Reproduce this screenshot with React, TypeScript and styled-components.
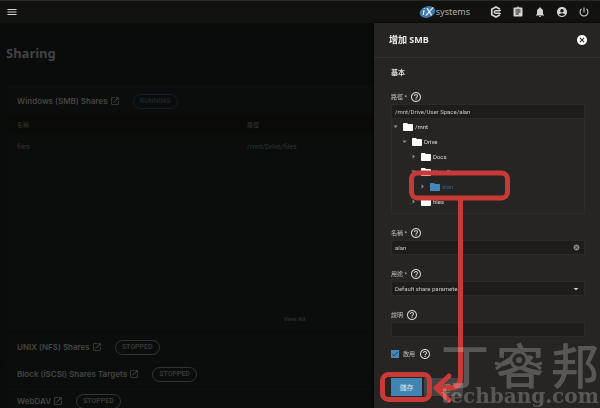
import React from 'react';
import styled, { createGlobalStyle } from 'styled-components';
import {
  MdAccountCircle,
  MdArrowDropDown,
  MdArrowRight,
  MdAssignment,
  MdCancel,
  MdCheck,
  MdFolder,
  MdHelpOutline,
  MdMenu,
  MdNotifications,
  MdOpenInNew,
  MdPowerSettingsNew,
} from 'react-icons/md';

const sans = `Roboto, "Noto Sans CJK TC", sans-serif`;
const heading = `"Noto Sans", "Noto Sans CJK TC", sans-serif`;

const GlobalStyle = createGlobalStyle`
  * { box-sizing: border-box; }
  body {
    margin: 0;
    overflow: hidden;
    background: #0a0c0b;
    color: #c9c7c5;
    font-family: ${sans};
    font-size: 6px;
  }
  button, input, select { font: inherit; color: inherit; }
  svg { display: block; flex: none; }
`;

const Page = styled.div`
  display: flex;
  flex-direction: column;
  height: 100vh;
  overflow: hidden;
`;

const TopBar = styled.header`
  display: flex;
  flex: none;
  align-items: center;
  height: 23px;
  padding: 0 10px 0 6px;
  border-top: 1px solid #2c2b2a;
  background: #121211;
`;

const IconButton = styled.button`
  display: flex;
  align-items: center;
  justify-content: center;
  width: 12px;
  height: 12px;
  padding: 0;
  border: 0;
  background: none;
  color: #d8d6d3;
`;

const Brand = styled.a`
  display: flex;
  align-items: center;
  margin-left: auto;
  color: #aeaca9;
  font-family: "Noto Sans", sans-serif;
  font-size: 9px;
  line-height: 12px;
  text-decoration: none;
`;

const TopActions = styled.nav`
  display: flex;
  gap: 10px;
  margin-left: 20px;
`;

const Main = styled.main`
  display: flex;
  flex: 1;
  flex-direction: column;
  gap: 2px;
  min-height: 0;
  padding: 0 17px 0 6px;
`;

const PageTitle = styled.h1`
  margin: 18px 0 19px;
  color: #414342;
  font-family: ${heading};
  font-size: 13px;
  font-weight: 700;
  line-height: 24px;
`;

const Card = styled.section`
  flex: none;
  background: #0b0d0c;
  border-top: 1px solid #0e100f;
`;

const CardHeader = styled.div<{ $tall?: boolean }>`
  display: flex;
  align-items: center;
  gap: 13px;
  height: ${(p) => (p.$tall ? 28 : 24)}px;
  padding: 0 11px;
`;

const CardLink = styled.a`
  display: flex;
  align-items: center;
  gap: 2px;
  color: #434544;
  font-family: Inter, sans-serif;
  font-size: 8px;
  font-weight: 600;
  line-height: 12px;
  text-decoration: none;
`;

const Pill = styled.span<{ $running?: boolean }>`
  display: flex;
  align-items: center;
  justify-content: center;
  width: 45px;
  height: 15px;
  border: 1px solid ${(p) => (p.$running ? '#131d25' : '#333534')};
  border-radius: 8px;
  color: ${(p) => (p.$running ? '#1b262e' : '#3b3d3c')};
  font-size: 7px;
  font-weight: 500;
`;

const Table = styled.table`
  width: 100%;
  border-collapse: collapse;
  table-layout: fixed;
  color: #303231;
  text-align: left;

  th, td { padding: 0 11px; font-size: 7px; font-weight: 400; }
  th { height: 18px; background: #0a0b08; color: #333531; font-size: 6px; }
  td { height: 28px; }
  th:first-child { width: 230px; }
`;

const CardFooter = styled.div`
  display: flex;
  align-items: flex-end;
  justify-content: center;
  height: 171px;
  padding-bottom: 8px;
`;

const ViewAll = styled.a`
  color: #2f3130;
  font-size: 6px;
  font-weight: 500;
  line-height: 10px;
  text-decoration: none;
`;

const Drawer = styled.aside`
  position: fixed;
  top: 23px;
  right: 0;
  bottom: 0;
  width: 226px;
  background: #272524;
  box-shadow: -1px 0 3px #050505;
`;

const DrawerHeader = styled.div`
  display: flex;
  align-items: center;
  justify-content: space-between;
  height: 35px;
  padding: 0 12px 0 15px;
  border-bottom: 1px solid #312f2e;
`;

const DrawerTitle = styled.h2`
  margin: 0;
  color: #efedeb;
  font-family: ${heading};
  font-size: 9px;
  font-weight: 700;
  line-height: 14px;
`;

const Form = styled.form`
  display: flex;
  flex-direction: column;
  padding: 9px 15px 0 17px;
`;

const Legend = styled.h3`
  margin: 0 0 10px;
  color: #dddbd9;
  font-size: 7px;
  font-weight: 700;
  line-height: 12px;
`;

const Field = styled.div`
  margin-bottom: 11px;
`;

const LabelRow = styled.div`
  display: flex;
  align-items: center;
  gap: 3px;
  height: 15px;
`;

const Label = styled.label`
  color: #c2c0be;
  font-size: 6px;
  line-height: 10px;
`;

const Box = styled.div`
  display: grid;
  grid-template-columns: 1fr 12px;
  align-items: center;
  height: 15px;
  padding-right: 2px;
  border: 1px solid #2c2a29;
  background: #1e1d1c;

  > * { grid-row: 1; }
  > input, > select { grid-column: 1 / -1; }
  > button, > svg { grid-column: 2; pointer-events: none; }
`;

const TextInput = styled.input`
  width: 100%;
  height: 13px;
  padding: 0 3px;
  border: 0;
  outline: 0;
  background: none;
`;

const Select = styled.select`
  appearance: none;
  width: 100%;
  height: 13px;
  padding: 0 3px;
  border: 0;
  outline: 0;
  background: none;
`;

const Tree = styled.ul`
  height: 95px;
  margin: 0;
  padding: 0;
  border: 1px solid #2e2c2b;
  border-top: 0;
  list-style: none;
`;

const TreeItem = styled.li<{ $level: number }>`
  display: flex;
  height: 15px;
  padding-left: ${(p) => p.$level * 9}px;
`;

const TreeButton = styled.button<{ $active?: boolean }>`
  display: flex;
  align-items: center;
  gap: 1px;
  padding: 0;
  border: 0;
  background: none;
  color: ${(p) => (p.$active ? '#35617f' : '#dddbd9')};

  svg:first-child { margin-left: -2px; color: #8a8886; }
  svg:nth-child(2) { color: ${(p) => (p.$active ? '#4587b8' : '#ffffff')}; }
`;

const CheckRow = styled.div`
  display: flex;
  align-items: center;
  gap: 4px;
  height: 12px;
`;

const CheckWrap = styled.span`
  display: grid;
  width: 8px;
  height: 8px;
  > * { grid-area: 1 / 1; }
  > svg { pointer-events: none; color: #1e2f3c; }
`;

const Checkbox = styled.input`
  appearance: none;
  width: 8px;
  height: 8px;
  margin: 0;
  background: #4587b8;
`;

const Buttons = styled.div`
  display: flex;
  gap: 2px;
  margin-top: 18px;
`;

const Button = styled.button<{ $primary?: boolean }>`
  height: 18px;
  min-width: ${(p) => (p.$primary ? 31 : 39)}px;
  padding: 0;
  border: 0;
  background: ${(p) => (p.$primary ? '#4084b4' : '#454341')};
  color: ${(p) => (p.$primary ? '#d7e6f0' : '#c9c7c5')};
  font-size: 7px;
`;

const Marks = styled.svg`
  position: absolute;
  top: 0;
  left: 0;
  overflow: visible;
  pointer-events: none;
`;

const Watermark = styled.div`
  position: absolute;
  right: 1px;
  bottom: 0;
  width: 158px;
  color: #ffffff;
  opacity: 0.23;
  pointer-events: none;
`;

const WatermarkName = styled.div`
  display: flex;
  justify-content: space-between;
  font-family: "Noto Sans CJK TC", sans-serif;
  font-size: 48px;
  font-weight: 500;
  line-height: 42px;
`;

const WatermarkSite = styled.div`
  font-family: "DejaVu Serif", serif;
  font-size: 20px;
  font-weight: 700;
  line-height: 24px;
  white-space: nowrap;
`;

const Eye = styled.svg`
  position: absolute;
  top: 7px;
  left: 51px;
`;

function Help({ topic }: { topic: string }) {
  return (
    <IconButton type="button" aria-label={topic}>
      <MdHelpOutline size={12} />
    </IconButton>
  );
}

function BrandMark() {
  return (
    <svg width="17" height="14" viewBox="0 0 17 14" aria-hidden="true">
      <ellipse cx="8.5" cy="7" rx="8" ry="5.6" fill="#3f7aa6" transform="rotate(-18 8.5 7)" />
      <path d="M5 5.2 4.2 10M5.4 3.2v.7M8 3.2l4.6 7.2M14.2 2.4 6.8 10.6" stroke="#e3edf3" strokeWidth="1.3" fill="none" />
    </svg>
  );
}

function CommandIcon() {
  return (
    <svg width="12" height="12" viewBox="0 0 24 24" fill="none" stroke="currentColor" aria-hidden="true">
      <path d="M20 6.5 12 2 3.5 6.7v10.6L12 22l8-4.5" strokeWidth="3.4" />
      <path d="M22 9H10.5L8 12l2.5 3H22M11 12h9" strokeWidth="2.4" />
    </svg>
  );
}

const folders = [
  { name: '/mnt', level: 0, open: true },
  { name: 'Drive', level: 1, open: true },
  { name: 'Docs', level: 2 },
  { name: 'User Space', level: 2, open: true },
  { name: 'alan', level: 3, active: true },
  { name: 'files', level: 2 },
];

const services = ['UNIX (NFS) Shares', 'Block (iSCSI) Shares Targets', 'WebDAV'];

function ShareTitle({ name }: { name: string }) {
  return (
    <CardLink href="#">
      {name}
      <MdOpenInNew size={10} />
    </CardLink>
  );
}

export default function App() {
  return (
    <Page>
      <GlobalStyle />
      <TopBar>
        <IconButton aria-label="Menu">
          <MdMenu size={12} />
        </IconButton>
        <Brand href="#">
          <BrandMark />
          systems
        </Brand>
        <TopActions>
          <IconButton aria-label="TrueCommand"><CommandIcon /></IconButton>
          <IconButton aria-label="Tasks"><MdAssignment size={12} /></IconButton>
          <IconButton aria-label="Alerts"><MdNotifications size={12} /></IconButton>
          <IconButton aria-label="Account"><MdAccountCircle size={12} /></IconButton>
          <IconButton aria-label="Power"><MdPowerSettingsNew size={12} /></IconButton>
        </TopActions>
      </TopBar>

      <Main>
        <PageTitle>Sharing</PageTitle>
        <Card>
          <CardHeader $tall>
            <ShareTitle name="Windows (SMB) Shares" />
            <Pill $running>RUNNING</Pill>
          </CardHeader>
          <Table>
            <thead>
              <tr><th>名稱</th><th>路徑</th></tr>
            </thead>
            <tbody>
              <tr><td>files</td><td>/mnt/Drive/files</td></tr>
            </tbody>
          </Table>
          <CardFooter>
            <ViewAll href="#">View All</ViewAll>
          </CardFooter>
        </Card>
        {services.map((name) => (
          <Card key={name}>
            <CardHeader>
              <ShareTitle name={name} />
              <Pill>STOPPED</Pill>
            </CardHeader>
          </Card>
        ))}
      </Main>

      <Drawer>
        <DrawerHeader>
          <DrawerTitle>增加 SMB</DrawerTitle>
          <IconButton aria-label="Close"><MdCancel size={12} color="#ffffff" /></IconButton>
        </DrawerHeader>
        <Form>
          <Legend>基本</Legend>
          <Field>
            <LabelRow>
              <Label htmlFor="path">路徑 *</Label>
              <Help topic="路徑" />
            </LabelRow>
            <Box><TextInput id="path" defaultValue="/mnt/Drive/User Space/alan" /></Box>
            <Tree>
              {folders.map((f) => (
                <TreeItem key={f.name} $level={f.level}>
                  <TreeButton type="button" $active={f.active}>
                    {f.open ? <MdArrowDropDown size={11} /> : <MdArrowRight size={11} />}
                    <MdFolder size={12} />
                    {f.name}
                  </TreeButton>
                </TreeItem>
              ))}
            </Tree>
          </Field>
          <Field>
            <LabelRow>
              <Label htmlFor="name">名稱 *</Label>
              <Help topic="名稱" />
            </LabelRow>
            <Box>
              <TextInput id="name" defaultValue="alan" />
              <IconButton type="button" aria-label="Clear"><MdCancel size={7} color="#8f8d8b" /></IconButton>
            </Box>
          </Field>
          <Field>
            <LabelRow>
              <Label htmlFor="purpose">用途 *</Label>
              <Help topic="用途" />
            </LabelRow>
            <Box>
              <Select id="purpose"><option>Default share parameters</option></Select>
              <MdArrowDropDown size={12} />
            </Box>
          </Field>
          <Field>
            <LabelRow>
              <Label htmlFor="description">說明</Label>
              <Help topic="說明" />
            </LabelRow>
            <Box><TextInput id="description" /></Box>
          </Field>
          <CheckRow>
            <CheckWrap>
              <Checkbox type="checkbox" id="enabled" defaultChecked />
              <MdCheck size={8} />
            </CheckWrap>
            <Label htmlFor="enabled">啟用</Label>
            <Help topic="啟用" />
          </CheckRow>
          <Buttons>
            <Button type="button" $primary>儲存</Button>
            <Button type="button">取消</Button>
          </Buttons>
        </Form>
        <Marks width="226" height="385" viewBox="0 0 226 385" fill="none" stroke="#c73a38" aria-hidden="true">
          <rect x="37.5" y="150" width="96" height="25" rx="6" strokeWidth="5" />
          <rect x="8.5" y="351.5" width="47" height="25" rx="6" strokeWidth="5" />
          <path d="M86.5 175V354Q86.5 365 76 365H65" strokeWidth="5" />
          <path d="M75 353 62 365 75 377" strokeWidth="5" strokeLinecap="round" strokeLinejoin="round" />
        </Marks>
        <Watermark>
          <WatermarkName><span>丁</span><span>客</span><span>邦</span></WatermarkName>
          <WatermarkSite>techbang.com</WatermarkSite>
          <Eye width="54" height="24" viewBox="0 0 54 24" fill="none" stroke="#ffffff" aria-hidden="true">
            <circle cx="27" cy="11" r="8" fill="#272524" strokeWidth="3" />
            <circle cx="27" cy="11" r="3" fill="#ffffff" stroke="none" />
            <path d="M19 13 9 16M35 13l9 3M9 16l-6-2M9 16l-5 4M44 16l6-2M44 16l5 4" strokeWidth="3" />
          </Eye>
        </Watermark>
      </Drawer>
    </Page>
  );
}
